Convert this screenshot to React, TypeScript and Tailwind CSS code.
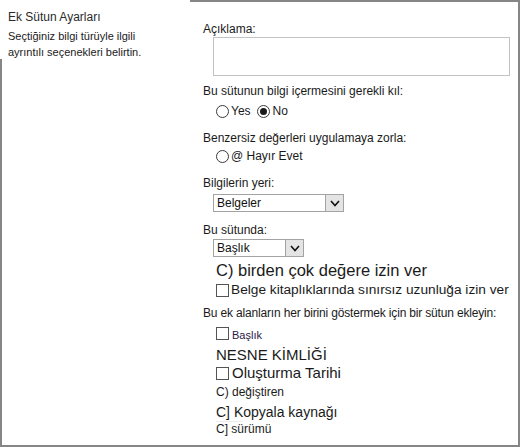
import React from "react";

function Radio({ checked }: { checked?: boolean }) {
  return (
    <span className="inline-flex w-[13px] h-[13px] shrink-0 rounded-full border border-[#3a3a3a] bg-white items-center justify-center">
      {checked ? <span className="block w-[7px] h-[7px] rounded-full bg-[#1a1a1a]" /> : null}
    </span>
  );
}

function Check() {
  return <span className="inline-block w-[13px] h-[13px] shrink-0 border border-[#555] bg-white" />;
}

function Select({ value, width }: { value: string; width: string }) {
  return (
    <div className={`flex h-[18px] border border-[#a3a3a3] bg-white ml-[10px] ${width}`}>
      <div className="flex-1 pl-[3px] text-[12px] leading-[16px] text-[#111]">{value}</div>
      <div className="w-[18px] border-l border-[#a3a3a3] bg-[#e4e4e4] flex items-center justify-center">
        <svg width="10" height="7" viewBox="0 0 10 7">
          <polyline points="1,1 5,5.5 9,1" fill="none" stroke="#111" strokeWidth="1.6" />
        </svg>
      </div>
    </div>
  );
}

export default function App() {
  return (
    <div className="w-[520px] h-[447px] bg-white flex font-['Liberation_Sans',Arial,sans-serif] text-[#1a1a1a] border-b-2 border-r-2 border-[#868686]">
      <div className="w-[190px] flex flex-col">
        <div className="h-[59px] pl-[8px] pt-[10px]">
          <div className="text-[12px] leading-[15px] text-[#2a2a2a]">Ek Sütun Ayarları</div>
          <div className="mt-[3px] text-[11px] leading-[16px]">
            Seçtiğiniz bilgi türüyle ilgili
            <br />
            ayrıntılı seçenekleri belirtin.
          </div>
        </div>
        <div className="flex-1 border-l-2 border-[#868686]" />
      </div>

      <div className="flex-1 border-t-2 border-[#868686] pl-[13px] pt-[20px] flex flex-col items-start">
        <div className="text-[12px] leading-[15px]">Açıklama:</div>
        <div className="ml-[10px] w-[297px] h-[39px] border border-[#c3c3c3] bg-white" />

        <div className="mt-[8px] text-[12px] leading-[15px]">Bu sütunun bilgi içermesini gerekli kıl:</div>
        <div className="mt-[4px] ml-[13px] flex items-center h-[16px] text-[12px] leading-[16px]">
          <Radio />
          <span className="ml-[2px]">Yes</span>
          <span className="ml-[6px] flex">
            <Radio checked />
          </span>
          <span className="ml-[3px]">No</span>
        </div>

        <div className="mt-[12px] text-[12px] leading-[15px]">Benzersiz değerleri uygulamaya zorla:</div>
        <div className="mt-[2px] ml-[13px] flex items-center h-[16px] text-[12px] leading-[16px]">
          <Radio />
          <span className="ml-[2px]">@ Hayır Evet</span>
        </div>

        <div className="mt-[12px] text-[12px] leading-[15px]">Bilgilerin yeri:</div>
        <div className="mt-[3px]">
          <Select value="Belgeler" width="w-[131px]" />
        </div>

        <div className="mt-[11px] text-[12px] leading-[15px]">Bu sütunda:</div>
        <div className="mt-[1px]">
          <Select value="Başlık" width="w-[91px]" />
        </div>

        <div className="mt-[3px] ml-[13px] text-[16.5px] leading-[20px]">C) birden çok değere izin ver</div>
        <div className="mt-[1px] ml-[13px] flex items-center h-[18px] text-[13.7px] leading-[18px]">
          <Check />
          <span className="ml-[2px]">Belge kitaplıklarında sınırsız uzunluğa izin ver</span>
        </div>

        <div className="mt-[7px] text-[12px] tracking-[-0.17px] leading-[15px]">
          Bu ek alanların her birini göstermek için bir sütun ekleyin:
        </div>
        <div className="mt-[4px] ml-[13px] flex items-center h-[16px] text-[11px] leading-[16px] text-[#2a1848]">
          <Check />
          <span className="ml-[3px] mt-[3px]">Başlık</span>
        </div>

        <div className="mt-[5px] ml-[13px] text-[15px] leading-[18px]">NESNE KİMLİĞİ</div>
        <div className="ml-[13px] flex items-center h-[18px] text-[15px] leading-[18px]">
          <Check />
          <span className="ml-[3px]">Oluşturma Tarihi</span>
        </div>

        <div className="mt-[3px] ml-[13px] text-[12px] leading-[15px]">C) değiştiren</div>
        <div className="mt-[3px] ml-[13px] text-[14px] leading-[18px]">C] Kopyala kaynağı</div>
        <div className="ml-[13px] w-[26px] h-px bg-[#ededed]" />
        <div className="ml-[13px] text-[12px] leading-[15px]">C] sürümü</div>
      </div>
    </div>
  );
}
